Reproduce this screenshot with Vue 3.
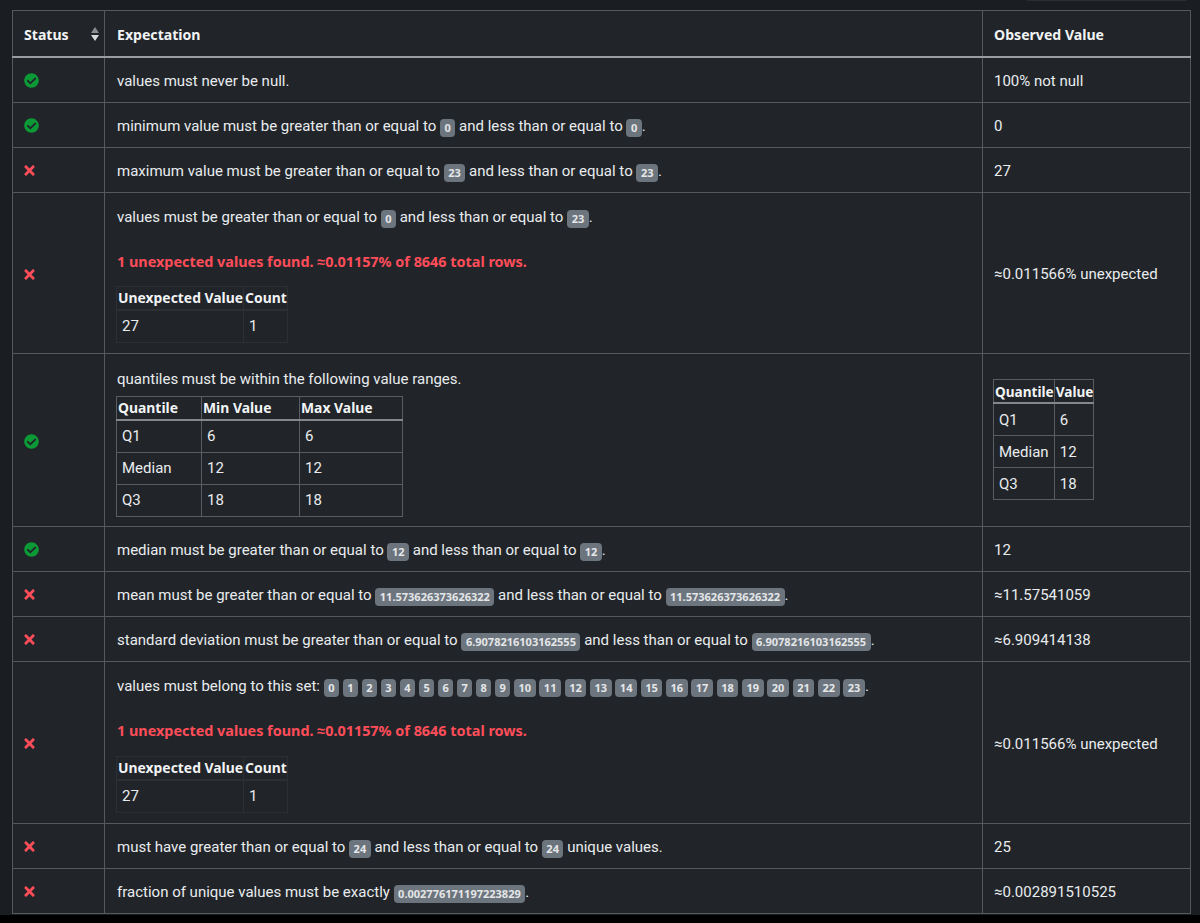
<script setup>
const b = (t) => ({ b: String(t) })
const setBadges = Array.from({ length: 24 }, (_, i) => i)
const ok = 'ok'
const no = 'no'
const simple = (status, parts, observed) => ({ status, parts, observed })
const before = [
  simple(ok, ['values must never be null.'], '100% not null'),
  simple(ok, ['minimum value must be greater than or equal to ', b(0), ' and less than or equal to ', b(0), '.'], '0'),
  simple(no, ['maximum value must be greater than or equal to ', b(23), ' and less than or equal to ', b(23), '.'], '27')
]
const middle = [
  simple(ok, ['median must be greater than or equal to ', b(12), ' and less than or equal to ', b(12), '.'], '12'),
  simple(no, ['mean must be greater than or equal to ', b('11.573626373626322'), ' and less than or equal to ', b('11.573626373626322'), '.'], '≈11.57541059'),
  simple(no, ['standard deviation must be greater than or equal to ', b('6.9078216103162555'), ' and less than or equal to ', b('6.9078216103162555'), '.'], '≈6.909414138')
]
const after = [
  simple(no, ['must have greater than or equal to ', b(24), ' and less than or equal to ', b(24), ' unique values.'], '25'),
  simple(no, ['fraction of unique values must be exactly ', b('0.002776171197223829'), '.'], '≈0.002891510525')
]
const quantiles = [
  ['Q1', 6, 6],
  ['Median', 12, 12],
  ['Q3', 18, 18]
]
const checkPath = 'M504 256c0 136.967-111.033 248-248 248S8 392.967 8 256 119.033 8 256 8s248 111.033 248 248zM227.314 387.314l184-184c6.248-6.248 6.248-16.379 0-22.627l-22.627-22.627c-6.248-6.249-16.379-6.249-22.628 0L216 308.118l-70.059-70.059c-6.248-6.248-16.379-6.248-22.628 0l-22.627 22.627c-6.248 6.248-6.248 16.379 0 22.627l104 104c6.249 6.249 16.379 6.249 22.628.001z'
const timesPath = 'M242.72 256l100.07-100.07c12.28-12.28 12.28-32.19 0-44.48l-22.24-22.24c-12.28-12.28-32.19-12.28-44.48 0L176 189.28 75.93 89.21c-12.28-12.28-32.19-12.28-44.48 0L9.21 111.45c-12.28 12.28-12.28 32.19 0 44.48L109.28 256 9.21 356.07c-12.28 12.28-12.28 32.19 0 44.48l22.24 22.24c12.28 12.28 32.2 12.28 44.48 0L176 322.72l100.07 100.07c12.28 12.28 32.2 12.28 44.48 0l22.24-22.24c12.28-12.28 12.28-32.19 0-44.48L242.72 256z'
const rowsFirst = before
</script>

<template>
  <div class="page">
    <div class="topbar"><div class="search"></div></div>
    <table class="main">
      <colgroup>
        <col class="c1" />
        <col class="c2" />
        <col class="c3" />
      </colgroup>
      <thead>
        <tr>
          <th class="first">
            <div class="status-head">
              <span>Status</span>
              <svg class="sort" viewBox="0 0 8 14" width="8" height="14">
                <path d="M4 0 8 6H0z" fill="#8b8e91" />
                <path d="M4 14 0 8h8z" fill="#d6d8da" />
              </svg>
            </div>
          </th>
          <th>Expectation</th>
          <th class="last">Observed Value</th>
        </tr>
      </thead>
      <tbody>
        <tr v-for="(r, i) in rowsFirst" :key="'a' + i" class="row">
          <td class="first">
            <svg v-if="r.status === ok" class="ico-ok" viewBox="0 0 512 512"><path :d="checkPath" /></svg>
            <svg v-else class="ico-no" viewBox="0 0 352 512"><path :d="timesPath" /></svg>
          </td>
          <td :class="{ 'has-badge': r.parts.length > 1 }"><template v-for="(p, j) in r.parts" :key="j"><span v-if="p.b" class="badge">{{ p.b }}</span><template v-else>{{ p }}</template></template></td>
          <td class="last">{{ r.observed }}</td>
        </tr>

        <tr class="tall-a">
          <td class="first shifted"><svg class="ico-no" viewBox="0 0 352 512"><path :d="timesPath" /></svg></td>
          <td class="stack">
            <p class="line">values must be greater than or equal to <span class="badge">0</span> and less than or equal to <span class="badge">23</span>.</p>
            <p class="danger">1 unexpected values found. ≈0.01157% of 8646 total rows.</p>
            <table class="inner dim">
              <thead><tr><th class="uv">Unexpected Value</th><th>Count</th></tr></thead>
              <tbody><tr><td>27</td><td>1</td></tr></tbody>
            </table>
          </td>
          <td class="last shifted">≈0.011566% unexpected</td>
        </tr>

        <tr class="tall-b">
          <td class="first shifted"><svg class="ico-ok" viewBox="0 0 512 512"><path :d="checkPath" /></svg></td>
          <td class="stack">
            <p class="line q">quantiles must be within the following value ranges.</p>
            <table class="inner bright qt">
              <thead><tr><th>Quantile</th><th>Min Value</th><th>Max Value</th></tr></thead>
              <tbody><tr v-for="q in quantiles" :key="q[0]"><td>{{ q[0] }}</td><td>{{ q[1] }}</td><td>{{ q[2] }}</td></tr></tbody>
            </table>
          </td>
          <td class="last">
            <table class="inner bright ov">
              <thead><tr><th>Quantile</th><th>Value</th></tr></thead>
              <tbody><tr v-for="q in quantiles" :key="q[0]"><td>{{ q[0] }}</td><td>{{ q[1] }}</td></tr></tbody>
            </table>
          </td>
        </tr>

        <tr v-for="(r, i) in middle" :key="'m' + i" class="row">
          <td class="first">
            <svg v-if="r.status === ok" class="ico-ok" viewBox="0 0 512 512"><path :d="checkPath" /></svg>
            <svg v-else class="ico-no" viewBox="0 0 352 512"><path :d="timesPath" /></svg>
          </td>
          <td class="has-badge"><template v-for="(p, j) in r.parts" :key="j"><span v-if="p.b" class="badge">{{ p.b }}</span><template v-else>{{ p }}</template></template></td>
          <td class="last">{{ r.observed }}</td>
        </tr>

        <tr class="tall-c">
          <td class="first shifted"><svg class="ico-no" viewBox="0 0 352 512"><path :d="timesPath" /></svg></td>
          <td class="stack">
            <p class="line">values must belong to this set: <template v-for="n in setBadges" :key="n"><span class="badge">{{ n }}</span>{{ n < 23 ? ' ' : '' }}</template>.</p>
            <p class="danger">1 unexpected values found. ≈0.01157% of 8646 total rows.</p>
            <table class="inner dim c">
              <thead><tr><th class="uv">Unexpected Value</th><th>Count</th></tr></thead>
              <tbody><tr><td>27</td><td>1</td></tr></tbody>
            </table>
          </td>
          <td class="last shifted">≈0.011566% unexpected</td>
        </tr>

        <tr v-for="(r, i) in after" :key="'z' + i" class="row">
          <td class="first"><svg class="ico-no" viewBox="0 0 352 512"><path :d="timesPath" /></svg></td>
          <td class="has-badge"><template v-for="(p, j) in r.parts" :key="j"><span v-if="p.b" class="badge">{{ p.b }}</span><template v-else>{{ p }}</template></template></td>
          <td class="last">{{ r.observed }}</td>
        </tr>
      </tbody>
    </table>
  </div>
</template>

<style>
html, body { margin: 0; background: #000; }
</style>

<style scoped>
.page {
  width: 1200px;
  height: 915px;
  box-sizing: border-box;
  background: #1a1d21;
  padding-left: 12px;
  overflow: hidden;
  font-family: Roboto, sans-serif;
  font-size: 15px;
  color: #e9ecef;
}
.topbar { height: 10px; position: relative; }
.search {
  position: absolute;
  right: 11px;
  top: -8px;
  width: 165px;
  height: 9px;
  box-sizing: border-box;
  border: 1px solid #2b2f33;
  border-radius: 4px;
}
.main {
  width: 1178px;
  table-layout: fixed;
  border-collapse: collapse;
  background: #212529;
}
.c1 { width: 92px; }
.c2 { width: 878px; }
.c3 { width: 208px; }
.main > thead > tr > th,
.main > tbody > tr > td {
  border: 1px solid #55585c;
  padding: 0 12px;
  vertical-align: middle;
  text-align: left;
}
.main > thead > tr > th {
  height: 44px;
  padding-top: 1px;
  font-family: "Noto Sans", sans-serif;
  font-size: 14.1px;
  font-weight: 700;
  color: #f1f3f5;
  border-bottom: 2px solid #9a9c9f;
}
.main > thead > tr > th.first,
.main > tbody > tr > td.first,
.main > thead > tr > th.last,
.main > tbody > tr > td.last { padding-left: 11px; }
.main > tbody > tr.row > td { padding-top: 2px; }
.main > tbody > tr.row > td.has-badge { padding-top: 5px; }
.main > tbody > tr > td.shifted { padding-top: 3px; }
.main > tbody > tr > td.stack { vertical-align: top; padding-top: 13px; }
.tall-b > td.stack { padding-top: 14px !important; }
.status-head { display: flex; align-items: center; justify-content: space-between; margin-right: -7px; }
.sort { display: block; }
.row { height: 45px; }
.tall-a { height: 161px; }
.tall-b { height: 173px; }
.tall-c { height: 162px; }
.ico-ok { width: 15px; height: 15px; display: block; fill: #0b9a36; }
.ico-no { width: 11px; height: 15px; display: block; fill: #ff4d5a; }
.badge {
  display: inline-block;
  background: #6c757d;
  color: #e4e6e8;
  font-family: "Noto Sans", sans-serif;
  font-size: 11px;
  font-weight: 700;
  line-height: 14px;
  padding: 2px 4.5px;
  border-radius: 4px;
  vertical-align: -1px;
}
.line { margin: 0; line-height: 22px; height: 22px; white-space: nowrap; }
.danger {
  margin: 23px 0 13px;
  line-height: 22px;
  color: #ff4d5a;
  font-family: "Noto Sans", sans-serif;
  font-size: 14.4px;
  font-weight: 700;
}
.q { margin-bottom: 6px; }
.inner { border-collapse: collapse; background: #212529; margin-left: -1px; }
.inner.c { margin-top: 14px; }
.inner th {
  padding: 0 0 0 1px;
  text-align: left;
  white-space: nowrap;
  font-family: "Noto Sans", sans-serif;
  font-size: 13.9px;
  font-weight: 700;
  color: #f1f3f5;
  height: 22px;
}
.inner td { padding: 0 5px; height: 31px; }
.dim th, .dim td { border: 1px solid #2c3035; }
.dim th { border-bottom-width: 2px; }
.uv { width: 125px; }
.bright th, .bright td { border: 1px solid #5a5d61; }
.bright th { border-bottom: 2px solid #85888b; }
.qt th:nth-child(1) { width: 83px; }
.qt th:nth-child(2) { width: 96px; }
.qt th:nth-child(3) { width: 101px; }
.ov th { font-size: 13.6px; }
.ov td { padding-right: 3px; }
</style>
